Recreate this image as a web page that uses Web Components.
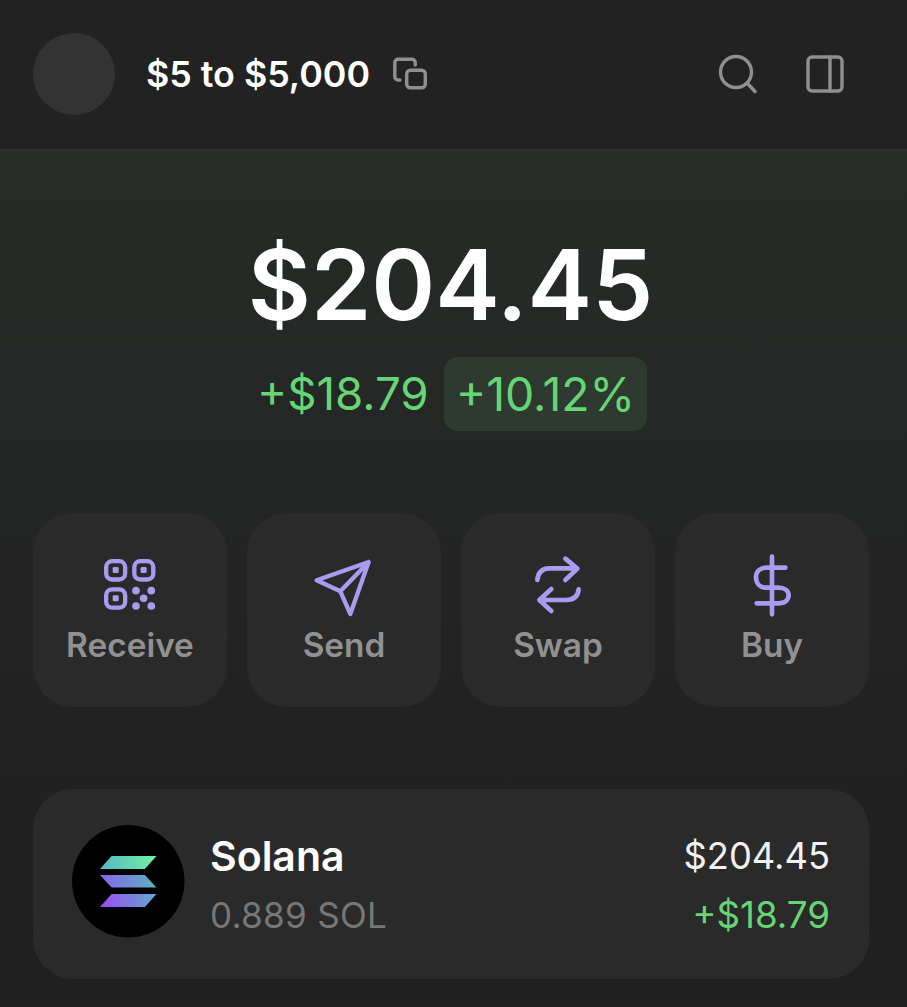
<!DOCTYPE html>
<html><head><meta charset="utf-8"><style>
html,body{margin:0;padding:0;background:#202020;height:1007px;overflow:hidden;font-family:Inter,"Liberation Sans",sans-serif}
</style></head><body>
<wallet-app>
  <wallet-header title-text="$5 to $5,000"></wallet-header>
  <wallet-balance amount="$204.45" delta="+$18.79" pct="+10.12%"></wallet-balance>
  <action-row></action-row>
  <token-card name="Solana" qty="0.889 SOL" value="$204.45" delta="+$18.79"></token-card>
</wallet-app>
<script>
function def(name, html){
  customElements.define(name, class extends HTMLElement{
    connectedCallback(){
      if(this.shadowRoot) return;
      const r=this.attachShadow({mode:'open'});
      r.innerHTML=typeof html==='function'?html(this):html;
    }
  });
}
const P='#a99bf0';
def('wallet-app',`<style>:host{display:block;width:907px;height:1007px;background:linear-gradient(180deg,#272c28 150px,#212121 760px,#202020 100%);overflow:hidden}</style><slot></slot>`);
def('wallet-header',el=>`<style>
:host{display:flex;box-sizing:border-box;height:151px;align-items:center;padding:0 63px 1px 33px;background:#222;border-bottom:2px solid #2e302e}
.av{width:82px;height:82px;border-radius:50%;background:#333;margin-right:31px;flex:none}
.t{color:#fff;font-size:35.800px;font-weight:600;white-space:nowrap}
.copy{margin-left:22px;display:block}
.sp{flex:1}
svg{fill:none;stroke:#8f8f8f;stroke-width:3.4;stroke-linecap:round;stroke-linejoin:round;flex:none}
.search{margin-right:48px}
</style>
<div class="av"></div><span class="t">${el.getAttribute('title-text')}</span>
<svg class="copy" width="36" height="36" viewBox="0 0 36 36"><path d="M8 24H6a3.200 3.200 0 0 1-3.200-3.200V6.400A3.200 3.200 0 0 1 6 3.200H20a3.200 3.200 0 0 1 3.200 3.200V9"/><rect x="14.700" y="14.200" width="18.600" height="17.600" rx="3.500"/></svg>
<div class="sp"></div>
<svg class="search" width="40" height="40" viewBox="0 0 40 40"><circle cx="18" cy="18" r="15.500"/><path d="M29.500 29.500 37 37.500"/></svg>
<svg width="38" height="38" viewBox="0 0 38 38"><rect x="2" y="2" width="34" height="34" rx="4"/><path d="M24 2v34"/></svg>`);
def('wallet-balance',el=>`<style>
:host{display:flex;flex-direction:column;align-items:center;padding-top:75px}
.a{color:#fff;font-size:97px;font-weight:600;line-height:118px;white-space:nowrap;margin-right:6px}
.r{display:flex;align-items:center;gap:15px;margin:13px 3px 0 0;color:#66d575;font-size:45.700px;line-height:74px;white-space:nowrap}
.p{background:#2e3a30;border-radius:14px;padding:0 12px;height:74px;font-size:46.300px}
</style>
<div class="a">${el.getAttribute('amount')}</div>
<div class="r"><span>${el.getAttribute('delta')}</span><span class="p">${el.getAttribute('pct')}</span></div>`);
def('action-row',`<style>:host{display:grid;grid-template-columns:repeat(4,194px);gap:20px;padding:82px 38px 0 33px}</style>
<action-button label="Receive"><svg width="53.300" height="53.300" viewBox="222 144 160 160"><g fill="none" stroke="${P}" stroke-width="13"><rect x="231.500" y="153.500" width="57" height="55" rx="18"/><rect x="316" y="153.500" width="57" height="55" rx="18"/><rect x="231.500" y="238" width="57" height="55" rx="18"/></g><g fill="${P}"><rect x="251" y="171" width="18" height="18" rx="4"/><rect x="335" y="171" width="18" height="18" rx="4"/><rect x="251" y="256" width="18" height="18" rx="4"/><circle cx="321" cy="242" r="11.500"/><circle cx="367" cy="242" r="11.500"/><circle cx="344" cy="265" r="11.500"/><circle cx="321" cy="288" r="11.500"/><circle cx="367" cy="288" r="11.500"/></g></svg></action-button>
<action-button label="Send"><svg width="66.670" height="66.670" viewBox="842 122 200 200"><path d="M1015 152 859 207 930 240 960 308ZM1015 152 930 240" fill="none" stroke="${P}" stroke-width="13" stroke-linejoin="round" stroke-linecap="round"/></svg></action-button>
<action-button label="Swap"><svg width="50" height="61.670" viewBox="235 130 150 185"><path d="M248 208C250 185 262 173 285 173H366M332 144 368 174 332 208M372 236C370 258 358 268 335 268H254M290 235 254 268 290 301" fill="none" stroke="${P}" stroke-width="14" stroke-linejoin="round" stroke-linecap="round"/></svg></action-button>
<action-button label="Buy"><svg width="40" height="65" viewBox="892 125 120 195"><path d="M952 136V309M992 169H935C915 169 904 182 904 198C904 215 915 229 935 229H971C990 229 1002 238 1002 252C1002 266 990 276 971 276H906" fill="none" stroke="${P}" stroke-width="14" stroke-linecap="round" stroke-linejoin="round"/></svg></action-button>`);
def('action-button',el=>`<style>
:host{display:block;box-sizing:border-box;height:194px;border-radius:40px;background:#2a2a2a}
.i{height:62px;margin-top:41px;display:flex;align-items:center;justify-content:center}
::slotted(svg){flex:none}
.w{display:flex;flex-direction:column;align-items:center;height:100%}
.l{color:#919191;font-size:33.400px;font-weight:600;line-height:38px;margin-top:10px}
</style><div class="w"><div class="i"><slot></slot></div><div class="l">${el.getAttribute('label')}</div></div>`);
def('token-card',el=>`<style>
:host{display:flex;align-items:center;box-sizing:border-box;width:836px;height:190px;margin:82px 0 0 33px;padding:0 39px;border-radius:40px;background:#2a2a2a}
.logo{width:112.500px;height:112.500px;flex:none;display:block;margin:0 25.500px 5.400px 0}
.c{flex:1}
.n{color:#fff;font-size:41px;font-weight:600;line-height:46px}
.q{color:#777;font-size:35px;line-height:40px;margin-top:16px;letter-spacing:.3px}
.r{text-align:right}
.v{color:#f2f2f2;font-size:36.300px;line-height:46px}
.d{color:#66d575;font-size:36.700px;line-height:40px;margin-top:16px}
</style>
<svg class="logo" viewBox="126 120 338 338"><defs>
<linearGradient id="a" gradientUnits="userSpaceOnUse" x1="215" y1="250" x2="375" y2="215"><stop offset="0" stop-color="#58b8c8"/><stop offset="1" stop-color="#70f0a0"/></linearGradient>
<linearGradient id="b" gradientUnits="userSpaceOnUse" x1="215" y1="272" x2="375" y2="306"><stop offset="0" stop-color="#8468e8"/><stop offset="1" stop-color="#5fb0c0"/></linearGradient>
<linearGradient id="c" gradientUnits="userSpaceOnUse" x1="215" y1="364" x2="375" y2="329"><stop offset="0" stop-color="#9a4df0"/><stop offset="1" stop-color="#5fa8d0"/></linearGradient>
</defs><circle cx="295" cy="289" r="169" fill="#000"/><path d="M245 213H380L345 252H210Z" fill="url(#a)"/><path d="M210 270H345L380 308H245Z" fill="url(#b)"/><path d="M245 327H380L345 366H210Z" fill="url(#c)"/></svg>
<div class="c"><div class="n">${el.getAttribute('name')}</div><div class="q">${el.getAttribute('qty')}</div></div>
<div class="r"><div class="v">${el.getAttribute('value')}</div><div class="d">${el.getAttribute('delta')}</div></div>`);
</script>
</body></html>
